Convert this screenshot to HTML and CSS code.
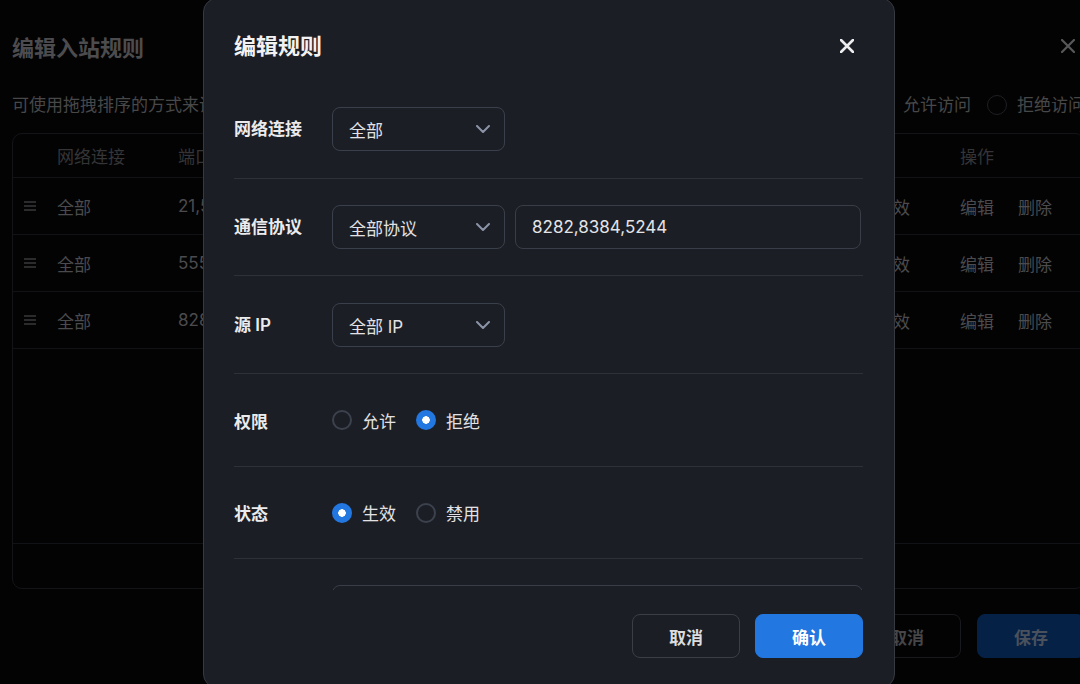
FILE: index.html
```html
<!DOCTYPE html>
<html lang="zh-CN">
<head>
    <meta charset="UTF-8">
    <meta name="viewport" content="width=device-width, initial-scale=1.0">
    <title>编辑入站规则</title>
    <link rel="stylesheet" href="styles.css">
</head>
<body>

    <!-- 背景页面（被遮罩） -->
    <div class="page">
        <div class="page-head">
            <h1>编辑入站规则</h1>
            <svg class="page-close" viewBox="0 0 14 14"><path d="M1 1L13 13M13 1L1 13"/></svg>
        </div>
        <div class="page-desc">
            <span>可使用拖拽排序的方式来调整规则的优先级，排序靠前的规则优先生效</span>
            <div class="default-group">
                <span class="bg-radio"></span><span>允许访问</span>
                <span class="bg-radio"></span><span>拒绝访问</span>
            </div>
        </div>

        <div class="rule-table">
            <div class="rt-row rt-head">
                <span></span><span>网络连接</span><span>端口</span><span></span><span>操作</span>
            </div>
            <div class="rt-row">
                <span class="drag"><svg viewBox="0 0 12 10"><path d="M0 1H12M0 5H12M0 9H12"/></svg></span>
                <span>全部</span><span>21,53,80</span><span>生效</span>
                <span class="ops"><span>编辑</span><span>删除</span></span>
            </div>
            <div class="rt-row">
                <span class="drag"><svg viewBox="0 0 12 10"><path d="M0 1H12M0 5H12M0 9H12"/></svg></span>
                <span>全部</span><span>5555</span><span>生效</span>
                <span class="ops"><span>编辑</span><span>删除</span></span>
            </div>
            <div class="rt-row">
                <span class="drag"><svg viewBox="0 0 12 10"><path d="M0 1H12M0 5H12M0 9H12"/></svg></span>
                <span>全部</span><span>8282,8384,5244</span><span>生效</span>
                <span class="ops"><span>编辑</span><span>删除</span></span>
            </div>
            <div class="rt-empty"></div>
            <div class="rt-foot"></div>
        </div>

        <div class="page-foot">
            <button class="bg-btn">取消</button>
            <button class="bg-btn primary">保存</button>
        </div>
    </div>

    <!-- 编辑规则弹窗 -->
    <div class="modal">
        <div class="modal-head">
            <h2>编辑规则</h2>
            <svg class="modal-close" viewBox="0 0 14 14"><path d="M1 1L13 13M13 1L1 13"/></svg>
        </div>

        <div class="modal-body">
            <div class="field">
                <label>网络连接</label>
                <div class="select">
                    <span>全部</span>
                    <svg viewBox="0 0 14 8"><path d="M1 1L7 7L13 1"/></svg>
                </div>
            </div>
            <div class="field">
                <label>通信协议</label>
                <div class="select">
                    <span>全部协议</span>
                    <svg viewBox="0 0 14 8"><path d="M1 1L7 7L13 1"/></svg>
                </div>
                <div class="input port-input">8282,8384,5244</div>
            </div>
            <div class="field">
                <label>源 IP</label>
                <div class="select">
                    <span>全部 IP</span>
                    <svg viewBox="0 0 14 8"><path d="M1 1L7 7L13 1"/></svg>
                </div>
            </div>
            <div class="field radio-field">
                <label>权限</label>
                <div class="radio-group">
                    <span class="radio"></span><span>允许</span>
                    <span class="radio on"></span><span>拒绝</span>
                </div>
            </div>
            <div class="field radio-field">
                <label>状态</label>
                <div class="radio-group">
                    <span class="radio on"></span><span>生效</span>
                    <span class="radio"></span><span>禁用</span>
                </div>
            </div>
            <div class="field last">
                <label></label>
                <div class="input wide"></div>
            </div>
        </div>

        <div class="modal-foot">
            <button class="btn">取消</button>
            <button class="btn primary">确认</button>
        </div>
    </div>

</body>
</html>
```

FILE: styles.css
```css
* {
    box-sizing: border-box;
}
body {
    margin: 0;
    height: 684px;
    overflow: hidden;
    position: relative;
    background-color: #030304;
    font-family: Inter, 'Noto Sans CJK SC', sans-serif;
    font-size: 17px;
    color: #4b4b4d;
}

/* ---- background page ---- */
.page {
    width: 1100px;
    padding: 0 15px 0 12px;
}
.page-head {
    height: 92px;
    display: flex;
    align-items: center;
    justify-content: space-between;
}
.page-head h1 {
    margin: 0;
    font-size: 22px;
    font-weight: 700;
    color: #4c4c4e;
}
.page-close {
    width: 14px;
    height: 14px;
    margin-right: 10px;
    stroke: #58585a;
    stroke-width: 2.2;
    stroke-linecap: round;
}
.page-desc {
    height: 26px;
    line-height: 26px;
    display: flex;
    justify-content: space-between;
    color: #484849;
}
.default-group {
    display: flex;
    align-items: center;
    gap: 10px;
}
.bg-radio {
    width: 20px;
    height: 20px;
    border: 1.5px solid #1e1f23;
    border-radius: 50%;
    margin-left: 6px;
}
.rule-table {
    margin-top: 15px;
    border: 1px solid #131418;
    border-radius: 10px;
}
.rt-row {
    display: grid;
    grid-template-columns: 44px 121px 698px 84px 1fr;
    align-items: center;
    height: 57px;
    border-bottom: 1px solid #111216;
}
.rt-head {
    height: 44px;
    color: #353537;
}
.drag {
    padding-left: 11px;
    display: flex;
}
.drag svg {
    width: 12px;
    height: 10px;
    stroke: #3a3a3c;
    stroke-width: 1.3;
}
.ops {
    display: flex;
    gap: 24px;
}
.rt-empty {
    height: 195px;
    border-bottom: 1px solid #111216;
}
.rt-foot {
    height: 44px;
}
.page-foot {
    margin-top: 25px;
    display: flex;
    justify-content: flex-end;
    gap: 16px;
}
.bg-btn {
    width: 108px;
    height: 44px;
    border: 1px solid #18191d;
    border-radius: 8px;
    background: transparent;
    font-family: inherit;
    font-size: 17px;
    font-weight: 700;
    color: #464648;
}
.bg-btn.primary {
    background-color: #062146;
    border-color: #062146;
    color: #4a515c;
}

/* ---- modal ---- */
.modal {
    position: absolute;
    left: 203px;
    top: -2px;
    width: 692px;
    height: 690px;
    background-color: #1c1e25;
    border: 1px solid #363940;
    border-radius: 14px;
    padding: 0 31px 0 30px;
    display: flex;
    flex-direction: column;
    color: #e6e6e8;
}
.modal-head {
    height: 81px;
    padding-top: 32px;
    display: flex;
    justify-content: space-between;
}
.modal-head h2 {
    margin: 0;
    font-size: 22px;
    line-height: 30px;
    font-weight: 700;
    color: #f2f2f3;
}
.modal-close {
    width: 14px;
    height: 14px;
    margin: 8px 9px 0 0;
    stroke: #ececee;
    stroke-width: 2.6;
    stroke-linecap: round;
}
.modal-body {
    height: 510px;
    overflow: hidden;
}
.field {
    display: flex;
    align-items: center;
    padding: 26px 0;
    border-bottom: 1px solid #2e3139;
}
.field:first-child {
    padding: 27px 0;
}
.field:nth-child(3) {
    padding-top: 27px;
}
.field label {
    width: 98px;
    flex-shrink: 0;
    margin-top: -3px;
    font-weight: 600;
    color: #ebebed;
}
.select {
    width: 173px;
    height: 44px;
    border: 1px solid #3a404b;
    border-radius: 8px;
    padding: 0 14px 0 16px;
    display: flex;
    align-items: center;
    justify-content: space-between;
    color: #e2e2e4;
}
.select svg {
    width: 14px;
    height: 8px;
    fill: none;
    stroke: #8a94a6;
    stroke-width: 2;
    stroke-linecap: round;
    stroke-linejoin: round;
}
.input {
    height: 44px;
    border: 1px solid #383d47;
    border-radius: 8px;
    padding: 0 16px;
    display: flex;
    align-items: center;
    color: #e4e4e6;
}
.port-input {
    width: 346px;
    margin-left: 10px;
}
.input.wide {
    flex: 1;
}
.radio-field {
    height: 93px;
}
.radio-field + .radio-field {
    height: 92px;
}
.radio-field label {
    margin-top: 0;
}
.radio-group {
    display: flex;
    align-items: center;
    gap: 10px;
    color: #e2e2e4;
}
.radio {
    width: 20px;
    height: 20px;
    border: 2px solid #3c424d;
    border-radius: 50%;
}
.radio + span + .radio {
    margin-left: 10px;
}
.radio.on {
    border: none;
    background: radial-gradient(circle, #fff 0 3.5px, #2277e0 4px);
}
.field.last {
    border-bottom: none;
}
.modal-foot {
    padding-top: 24px;
    display: flex;
    justify-content: flex-end;
    gap: 15px;
}
.btn {
    width: 108px;
    height: 44px;
    border: 1px solid #3a3e47;
    border-radius: 8px;
    background: transparent;
    font-family: inherit;
    font-size: 17px;
    font-weight: 700;
    color: #dcdcde;
}
.btn.primary {
    background-color: #2277e0;
    border-color: #2277e0;
    color: #fff;
}
```
